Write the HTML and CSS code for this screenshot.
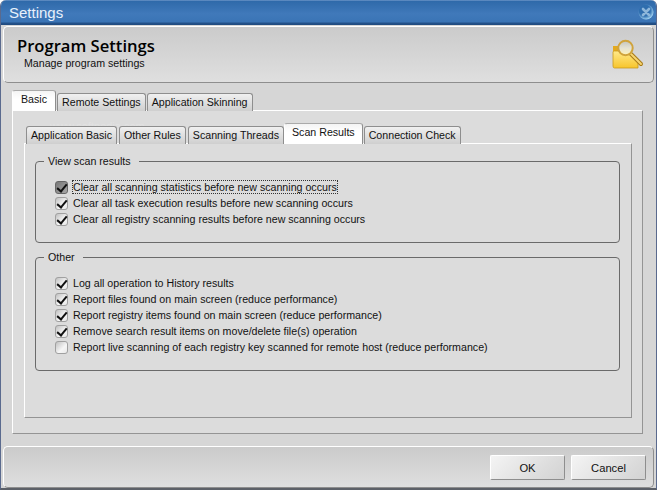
FILE: index.html
```html
<!DOCTYPE html>
<html lang="en">
<head>
  <meta charset="UTF-8" />
  <title>Settings</title>
  <link rel="stylesheet" href="styles.css">
</head>
<body>
  <div class="window">
    <div class="titlebar">
      <span class="title">Settings</span>
      <svg class="close" width="16" height="16" viewBox="0 0 16 16">
        <defs>
          <radialGradient id="orb" cx="0.42" cy="0.4" r="0.62">
            <stop offset="0" stop-color="#2f6aa8"/>
            <stop offset="0.6" stop-color="#2f6fb0"/>
            <stop offset="1" stop-color="#a8d8f4"/>
          </radialGradient>
        </defs>
        <circle cx="8" cy="8" r="7.5" fill="url(#orb)"/>
        <path d="M5 5 L11 11 M11 5 L5 11" stroke="#8db6da" stroke-width="2.6" stroke-linecap="round"/>
      </svg>
    </div>

    <div class="header">
      <div>
        <h1>Program Settings</h1>
        <p>Manage program settings</p>
      </div>
      <svg class="header-icon" width="32" height="32" viewBox="0 0 32 32">
        <defs>
          <linearGradient id="folder" x1="0" y1="0" x2="0" y2="1">
            <stop offset="0" stop-color="#ffe98a"/>
            <stop offset="1" stop-color="#f7c52c"/>
          </linearGradient>
          <linearGradient id="lens" x1="0" y1="0" x2="0" y2="1">
            <stop offset="0" stop-color="#c4c4bc"/>
            <stop offset="0.5" stop-color="#e4e2d4"/>
            <stop offset="1" stop-color="#fff3b8"/>
          </linearGradient>
        </defs>
        <path d="M1 8 H9 V28 H2 Q1 28 1 27 Z" fill="#e3a91f"/>
        <path d="M1 28 V14 Q1 13 2.5 13 H17 L26 24 V30 H2.5 Q1 30 1 28 Z" fill="url(#folder)" stroke="#c99a1c" stroke-width="0.8"/>
        <path d="M19 16 L29 26" stroke="#a87a16" stroke-width="4" stroke-linecap="round"/>
        <path d="M19 16 L29 26" stroke="#f6d572" stroke-width="2" stroke-linecap="round"/>
        <circle cx="13.5" cy="10" r="7.2" fill="url(#lens)" stroke="#d0a33c" stroke-width="2"/>
      </svg>
    </div>

    <div class="main">
      <div class="tabs">
        <div class="tab active">Basic</div>
        <div class="tab">Remote Settings</div>
        <div class="tab">Application Skinning</div>
      </div>
      <div class="panel outer-panel">
        <div class="tabs">
          <div class="tab">Application Basic</div>
          <div class="tab">Other Rules</div>
          <div class="tab">Scanning Threads</div>
          <div class="tab active">Scan Results</div>
          <div class="tab">Connection Check</div>
        </div>
        <div class="panel inner-panel">
          <fieldset class="group group-view">
            <legend>View scan results</legend>
            <label class="check"><span class="box on pressed"></span><span class="focused">Clear all scanning statistics before new scanning occurs</span></label>
            <label class="check"><span class="box on"></span><span>Clear all task execution results before new scanning occurs</span></label>
            <label class="check"><span class="box on"></span><span>Clear all registry scanning results before new scanning occurs</span></label>
          </fieldset>
          <fieldset class="group group-other">
            <legend>Other</legend>
            <label class="check"><span class="box on"></span><span>Log all operation to History results</span></label>
            <label class="check"><span class="box on"></span><span>Report files found on main screen (reduce performance)</span></label>
            <label class="check"><span class="box on"></span><span>Report registry items found on main screen (reduce performance)</span></label>
            <label class="check"><span class="box on"></span><span>Remove search result items on move/delete file(s) operation</span></label>
            <label class="check"><span class="box"></span><span>Report live scanning of each registry key scanned for remote host (reduce performance)</span></label>
          </fieldset>
        </div>
      </div>
    </div>

    <div class="footer">
      <button class="btn">OK</button>
      <button class="btn">Cancel</button>
    </div>

    <div class="watermark">SOFTPEDIA<small>www.softpedia.com</small></div>
  </div>
</body>
</html>
```

FILE: styles.css
```css
* {
  box-sizing: border-box;
  margin: 0;
  padding: 0;
}

body {
  width: 657px;
  height: 490px;
  overflow: hidden;
  font-family: "Liberation Sans", Arial, sans-serif;
  font-size: 10.65px;
  color: #111;
}

.window {
  position: relative;
  display: flex;
  flex-direction: column;
  height: 490px;
  background: #d6d6d6;
  border-left: 1px solid #5a6a8e;
  border-right: 1px solid #5a6a8e;
  border-bottom: 2px solid #5c6068;
  border-radius: 6px 6px 0 0;
  overflow: hidden;
}

.titlebar {
  display: flex;
  align-items: center;
  justify-content: space-between;
  height: 25px;
  padding: 0 2px 1px 8px;
  background: linear-gradient(#6f97c9 0, #2f6aaa 6%, #4079ba 55%, #3a74b5 88%, #24528a 92%, #1f4a7e 100%);
  flex: none;
}

.title {
  color: #e8f1fb;
  font-size: 15px;
}

.header {
  display: flex;
  align-items: center;
  justify-content: space-between;
  flex: none;
  height: 57px;
  margin: 1px 2px 0 2px;
  padding: 0 9px 0 13px;
  border: 1px solid #8e8e8e;
  border-top-color: #fff;
  border-left-color: #fff;
  border-radius: 5px;
  background: linear-gradient(#cbcbcb, #dfdfdf);
}

.header h1 {
  font-family: "Open Sans", sans-serif;
  font-size: 16.6px;
  font-weight: 600;
  line-height: 20px;
  margin-top: -2px;
  color: #000;
}

.header p {
  padding-left: 7px;
  line-height: 15px;
}

.header-icon {
  margin-top: -2px;
}

.main {
  flex: none;
  padding: 7px 13px 0 11px;
}

.tabs {
  display: flex;
  align-items: flex-end;
  height: 21px;
  position: relative;
  z-index: 1;
  margin-bottom: -1px;
}

.tab {
  height: 18px;
  padding: 0 4px;
  margin-right: 1px;
  line-height: 17px;
  white-space: nowrap;
  background: linear-gradient(#f0f0f0, #cfcfcf);
  border: 1px solid #8e8e8e;
  border-bottom: none;
  border-radius: 3px 3px 0 0;
}

.tab.active {
  height: 21px;
  line-height: 17px;
  padding: 0 8px;
  margin-right: 1px;
  background: linear-gradient(#f4f4f4, #ffffff 40%, #fff);
  border-color: #fff;
  border-top-color: #aaa;
  border-right-color: #8e8e8e;
}

.outer-panel > .tabs {
  padding-left: 2px;
}

.outer-panel .tab {
  margin-right: 2px;
}

.outer-panel .tab.active {
  padding: 0 7px;
  margin-left: -2px;
  margin-right: 1px;
}

.panel {
  background: #dcdcdc;
  border: 1px solid #949494;
  border-top-color: #fff;
  border-left-color: #fff;
}

.outer-panel {
  height: 324px;
  padding: 12px 10px 15px 11px;
}

.inner-panel {
  height: 275px;
  padding: 10px 11px 0 10px;
}

.group {
  border: 1px solid #6a6a6a;
  border-radius: 4px;
  padding: 0 0 0 19px;
}

.group legend {
  margin-left: -11px;
  padding: 0 8px 0 4px;
  line-height: 14px;
}

.group-view {
  height: 89px;
  padding-top: 11px;
  margin-bottom: 7px;
}

.group-other {
  height: 121px;
  padding-top: 11px;
}

.check {
  display: flex;
  align-items: center;
  height: 16px;
  gap: 5px;
  white-space: nowrap;
}

.focused {
  outline: 1px dotted #333;
}

.box {
  position: relative;
  flex: none;
  width: 13px;
  height: 13px;
  border: 1px solid #a0a0a0;
  border-radius: 3px;
  background: linear-gradient(135deg, #c0c0c0, #f6f6f6 60%, #e8e8e8);
}

.box.pressed {
  background: linear-gradient(135deg, #777, #a8a8a8);
  border-color: #666;
}

.box.on::after {
  content: "";
  position: absolute;
  left: 3px;
  top: 0;
  width: 4px;
  height: 8px;
  border: solid #111;
  border-width: 0 2px 2px 0;
  transform: rotate(40deg);
}

.footer {
  display: flex;
  justify-content: flex-end;
  align-items: flex-end;
  gap: 6px;
  flex: none;
  height: 42px;
  margin: 12px 2px 0 2px;
  padding: 0 7px 7px 0;
  border: 1px solid #8e8e8e;
  border-top-color: #fff;
  border-left-color: #fff;
  border-radius: 5px;
  background: linear-gradient(#cbcbcb, #dfdfdf);
}

.btn {
  width: 75px;
  height: 25px;
  font: inherit;
  font-size: 11.2px;
  color: #111;
  background: linear-gradient(135deg, #f4f4f4, #d2d2d2);
  border: 1px solid #8e8e8e;
  border-top-color: #fff;
  border-left-color: #fff;
  border-radius: 2px;
}

.watermark {
  position: absolute;
  left: 42px;
  top: 92px;
  color: rgba(255, 255, 255, 0.18);
  font-size: 20px;
  font-weight: bold;
  line-height: 20px;
  pointer-events: none;
}

.watermark small {
  display: block;
  margin-top: 9px;
  margin-left: 7px;
  font-size: 11px;
  font-weight: normal;
  line-height: 11px;
}
```
